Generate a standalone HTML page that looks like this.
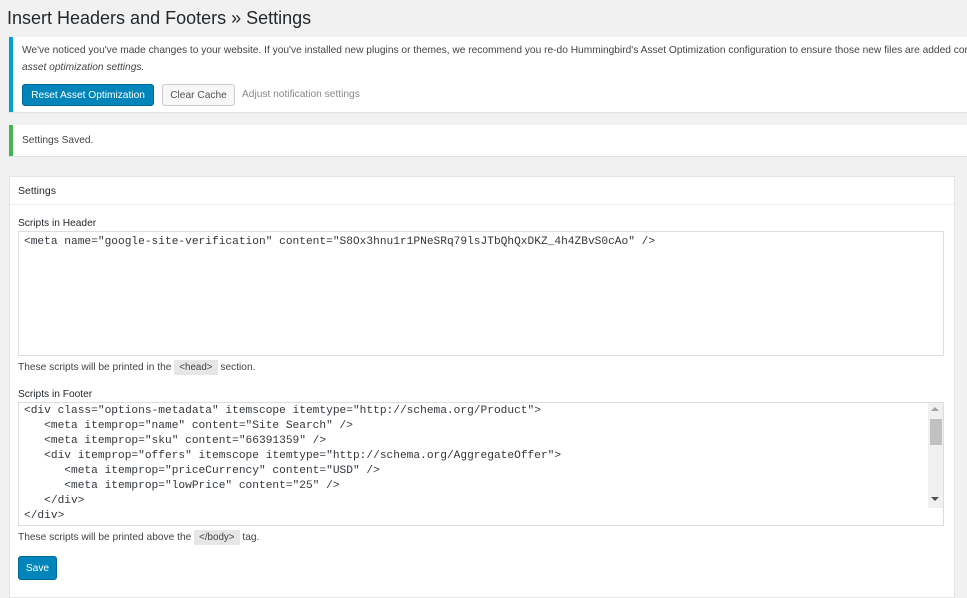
<!DOCTYPE html>
<html><head><style>
body{margin:0;background:#f1f1f1;font-family:"Liberation Sans",sans-serif;font-size:10.2px;color:#444;width:967px;height:574px;overflow:hidden;position:relative}
.abs{position:absolute}
h1{position:absolute;left:7px;top:8px;margin:0;font-size:18px;font-weight:400;color:#23282d}
.notice{position:absolute;left:9px;right:-5px;background:#fff;box-shadow:0 1px 1px rgba(0,0,0,.08)}
.btn{position:absolute;height:22px;line-height:21px;border-radius:3px;font-size:10.2px;box-sizing:border-box;padding:0 9px}
.pri{background:#0085ba;border:1px solid #006799;color:#fff}
.sec{background:#f7f7f7;border:1px solid #ccc;color:#555}
.ta{position:absolute;left:18px;width:926px;background:#fff;border:1px solid #ddd;box-sizing:border-box;font-family:"Liberation Mono",monospace;font-size:11.2px;color:#32373c;white-space:pre;line-height:15px;padding:3px 5px;overflow:hidden}
code{background:#e6e6e6;padding:2px 5px;font-family:"Liberation Sans",sans-serif;font-size:9.8px}
.lbl{position:absolute;left:18px;font-size:10.2px;color:#23282d}
</style></head><body>
<h1>Insert Headers and Footers » Settings</h1>
<div class="notice" style="top:37px;height:75px;border-left:4px solid #00a0d2">
<div class="abs" style="left:9px;top:8px;white-space:nowrap;color:#444">We've noticed you've made changes to your website. If you've installed new plugins or themes, we recommend you re-do Hummingbird's Asset Optimization configuration to ensure those new files are added correctly.</div>
<div class="abs" style="left:9px;top:25px;font-style:italic">asset optimization settings.</div>
<div class="btn pri" style="left:9px;top:47px;width:132px;padding:0;text-align:center">Reset Asset Optimization</div>
<div class="btn sec" style="left:149px;top:47px;width:73px;padding:0;text-align:center">Clear Cache</div>
<div class="abs" style="left:229px;top:52px;color:#888">Adjust notification settings</div>
</div>
<div class="notice" style="top:125px;height:31px;border-left:4px solid #46b450">
<div class="abs" style="left:9px;top:10px">Settings Saved.</div>
</div>
<div class="abs" style="left:9px;top:176px;width:944px;height:420px;background:#fff;border:1px solid #e5e5e5">
<div class="abs" style="left:0;right:0;top:0;height:27px;border-bottom:1px solid #eee"></div>
<div class="abs" style="left:8px;top:8px;font-size:10.5px;color:#23282d">Settings</div>
</div>
<div class="lbl" style="top:218px">Scripts in Header</div>
<div class="ta" style="top:231px;height:125px">&lt;meta name="google-site-verification" content="S8Ox3hnu1r1PNeSRq79lsJTbQhQxDKZ_4h4ZBvS0cAo" /&gt;</div>
<div class="abs" style="left:18px;top:362px">These scripts will be printed in the <code>&lt;head&gt;</code> section.</div>
<div class="lbl" style="top:389px">Scripts in Footer</div>
<div class="ta" style="top:402px;height:124px;padding-top:1px">&lt;div class="options-metadata" itemscope itemtype="http://schema.org/Product"&gt;
   &lt;meta itemprop="name" content="Site Search" /&gt;
   &lt;meta itemprop="sku" content="66391359" /&gt;
   &lt;div itemprop="offers" itemscope itemtype="http://schema.org/AggregateOffer"&gt;
      &lt;meta itemprop="priceCurrency" content="USD" /&gt;
      &lt;meta itemprop="lowPrice" content="25" /&gt;
   &lt;/div&gt;
&lt;/div&gt;</div>
<div class="abs" style="left:928px;top:403px;width:15px;height:105px;background:#f0f0f0"></div>
<div class="abs" style="left:930px;top:419px;width:12px;height:26px;background:#c1c1c1"></div>
<div class="abs" style="left:931px;top:407px;width:0;height:0;border:4px solid transparent;border-bottom-color:#a3a3a3;border-top:0"></div>
<div class="abs" style="left:931px;top:497px;width:0;height:0;border:4px solid transparent;border-top-color:#505050;border-bottom:0"></div>
<div class="abs" style="left:18px;top:532px">These scripts will be printed above the <code>&lt;/body&gt;</code> tag.</div>
<div class="btn pri" style="left:18px;top:556px;width:39px;padding:0;text-align:center;height:24px;line-height:23px">Save</div>
</body></html>
